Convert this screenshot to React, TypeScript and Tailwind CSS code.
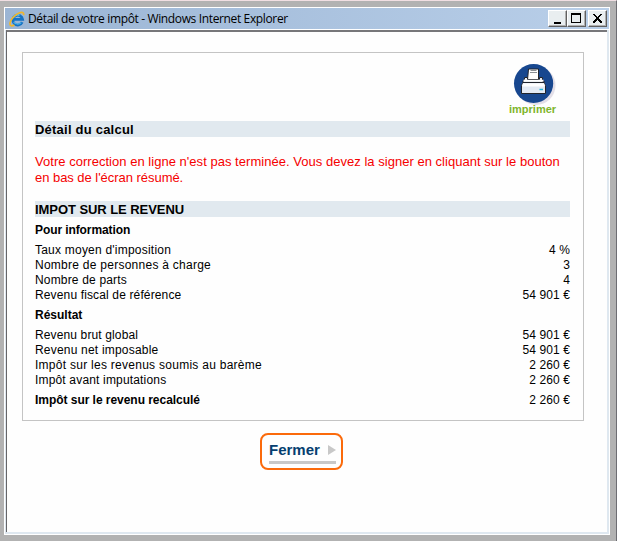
import React from 'react';

type Row = { label: string; value: string; tracking: string };

const information: Row[] = [
  { label: "Taux moyen d'imposition", value: '4 %', tracking: 'tracking-[0.22px]' },
  { label: 'Nombre de personnes à charge', value: '3', tracking: 'tracking-[0.26px]' },
  { label: 'Nombre de parts', value: '4', tracking: 'tracking-[0.17px]' },
  { label: 'Revenu fiscal de référence', value: '54 901 €', tracking: 'tracking-[0.14px]' },
];

const result: Row[] = [
  { label: 'Revenu brut global', value: '54 901 €', tracking: 'tracking-[0.13px]' },
  { label: 'Revenu net imposable', value: '54 901 €', tracking: 'tracking-[0.2px]' },
  { label: 'Impôt sur les revenus soumis au barème', value: '2 260 €', tracking: 'tracking-[0.27px]' },
  { label: 'Impôt avant imputations', value: '2 260 €', tracking: 'tracking-[0.17px]' },
];

function Rows({ rows }: { rows: Row[] }) {
  return (
    <div>
      {rows.map((r) => (
        <div key={r.label} className="flex h-[15px] justify-between whitespace-nowrap leading-[15px]">
          <span className={r.tracking}>{r.label}</span>
          <span className="tracking-[0.1px]">{r.value}</span>
        </div>
      ))}
    </div>
  );
}

function ExplorerIcon() {
  return (
    <svg width="16" height="16" viewBox="0 0 16 16">
      <path d="M13.2 11.2A4.9 4.9 0 1 1 13.6 8.4H5.2" fill="none" stroke="#1673c4" strokeWidth="2.8" />
      <path d="M4.2 7C5 4.4 8 3.2 10.5 4.2" fill="none" stroke="#63c6f4" strokeWidth="1.5" />
      <path d="M4.6 11C6.5 13.6 10 13.6 12.3 11.6" fill="none" stroke="#4db6ec" strokeWidth="1.2" />
      <path d="M14.7 4.2C15 1.4 13 .7 10 2C5.5 3.8 1.4 8.8 .9 12.4C.7 15.2 2.8 15.4 5.4 13.9" fill="none" stroke="#f0b62c" strokeWidth="1.7" />
    </svg>
  );
}

function WindowButton({ children }: { children: React.ReactNode }) {
  return (
    <button className="block h-[17px] w-[19px] border border-t-white border-l-white border-r-[#606060] border-b-[#606060] bg-[#e9eef0] shadow-[inset_-1px_-1px_0_#b0b0b0]">
      <svg width="17" height="15" viewBox="0 0 17 15" shapeRendering="crispEdges">{children}</svg>
    </button>
  );
}

function PrinterIcon() {
  return (
    <svg width="50" height="42" viewBox="0 0 50 42" className="block">
      <circle cx="27" cy="22.5" r="19.5" fill="#e3dfe8" />
      <circle cx="24.6" cy="20.5" r="19.6" fill="#17478f" />
      <path d="M19.5 6H29.5V17H18.5Z" fill="#fff" stroke="#20242c" />
      <path d="M21.5 7.5H27.5M21 9.5H28" stroke="#8b9095" />
      <path d="M15.5 16V14.5H18.5V16.5H30.5V14.5H33.5V18H35V22H14V18Z" fill="#e8ebf0" stroke="#20242c" />
      <path d="M14.5 17.5H34.5" stroke="#fff" strokeWidth="1.5" />
      <path d="M14 19.5H35L36.5 22.5V30.5H12.5V22.5Z" fill="#e3eaf4" stroke="#20242c" />
      <path d="M13.5 22H35.5" stroke="#fff" strokeWidth="3" />
      <path d="M30.5 26.5H34" stroke="#20b4df" strokeWidth="1.5" />
    </svg>
  );
}

export default function App() {
  return (
    <div className="h-[541px] w-[617px] border-t border-r border-t-[#f1dfe3] border-r-[#6d6d72] bg-[#b2b2b2] pt-[6px] pr-[6px] pb-[6px] pl-1 font-['Liberation_Sans',Arial,sans-serif] text-[12px] text-black">
      <div className="flex h-full flex-col border border-white bg-[#dfe8f0]">
        <header className="flex h-[21px] shrink-0 items-center bg-gradient-to-r from-[#9bb5d4] to-[#b9cfe9] pr-[2px] pl-[4px]">
          <ExplorerIcon />
          <h1 className="ml-[3px] flex-1 font-['Open_Sans',sans-serif] text-[12px] leading-5 tracking-[-0.36px] whitespace-nowrap">Détail de votre impôt - Windows Internet Explorer</h1>
          <div className="flex">
            <WindowButton><path d="M5 11H12V13H5Z" fill="#000" /></WindowButton>
            <WindowButton><path d="M3 2H13V12H3ZM4 4V11H12V4Z" fill="#000" fillRule="evenodd" /></WindowButton>
            <div className="w-[2px]" />
            <WindowButton><path d="M4 3H6V4H7V5H8V6H9V5H10V4H11V3H13V4H12V5H11V6H10V8H11V9H12V10H13V12H11V11H10V10H9V9H8V10H7V11H6V12H4V10H5V9H6V8H7V6H6V5H5V4H4Z" fill="#000" /></WindowButton>
          </div>
        </header>
        <div className="h-px bg-white" />
        <div className="mr-[2px] mb-[2px] ml-px flex flex-1 flex-col border-t-2 border-l border-t-[#77777a] border-l-[#656568] bg-[#fefefe]">
          <main className="mt-[20px] ml-[15px] h-[369px] w-[562px] border border-[#c4c4c4] pt-[10px] pr-[13px] pl-[12px]">
            <div className="-mr-px ml-auto flex h-[58px] w-[62px] flex-col items-start">
              <PrinterIcon />
              <span className="-mt-[3px] font-['Liberation_Sans'] text-[11px] leading-[14px] font-bold text-[#7eb52b]">imprimer</span>
            </div>
            <h2 className="h-4 bg-[#e1e9ef] text-[13px] leading-[17px] font-bold tracking-[0.22px]">Détail du calcul</h2>
            <p className="mt-4 text-[13px] leading-4 whitespace-nowrap text-[#f50000]">
              <span className="block pt-px leading-[15px] tracking-[0.03px]">Votre correction en ligne n'est pas terminée. Vous devez la signer en cliquant sur le bouton</span>
              <span className="block pt-px leading-[15px] tracking-[-0.04px]">en bas de l'écran résumé.</span>
            </p>
            <h2 className="mt-4 h-4 bg-[#e1e9ef] text-[13px] leading-[17px] font-bold tracking-[-0.06px]">IMPOT SUR LE REVENU</h2>
            <h3 className="flex h-[26px] items-center pb-px font-bold tracking-[-0.09px]">Pour information</h3>
            <Rows rows={information} />
            <h3 className="flex h-[25px] items-center pb-[2px] font-bold">Résultat</h3>
            <Rows rows={result} />
            <div className="flex h-[25px] items-center justify-between pb-[2px]">
              <strong className="tracking-[-0.04px]">Impôt sur le revenu recalculé</strong>
              <span className="tracking-[0.1px]">2 260 €</span>
            </div>
          </main>
          <button className="mt-[12px] ml-[253px] h-[37px] w-[83px] rounded-[8px] border-2 border-[#fb6a0b] px-[7px] text-left">
            <span className="flex h-[24px] w-[67px] items-center justify-between border-b-[3px] border-[#c8c8c8] text-[15px] font-bold text-[#063f70]">
              <span className="pt-px">Fermer</span>
              <svg width="8" height="10"><path d="M0 0L8 5L0 10Z" fill="#c8c8c8" /></svg>
            </span>
          </button>
        </div>
      </div>
    </div>
  );
}
